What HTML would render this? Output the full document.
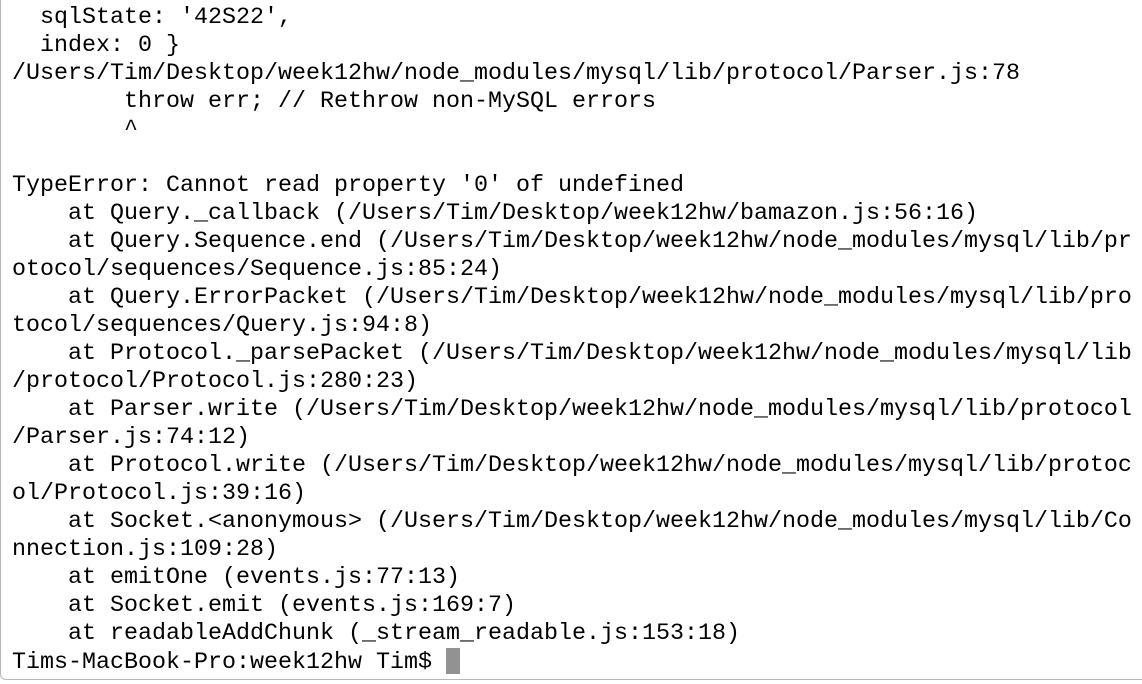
<!DOCTYPE html>
<html><head><style>
html,body{margin:0;padding:0;background:#fff;}
body{width:1142px;height:684px;overflow:hidden;position:relative;}
.win{position:absolute;left:0;top:-10px;width:1150px;height:690px;border:1px solid #b8b8b8;border-radius:0 0 6px 6px;box-sizing:border-box;}
pre{position:absolute;left:12px;top:4px;margin:0;font-family:"Liberation Mono",monospace;font-size:23.33px;line-height:28px;color:#000;}
.cur{display:inline-block;width:14px;height:26px;background:#929292;vertical-align:-6px;}
</style></head><body>
<div class="win"></div>
<pre>  sqlState: '42S22',
  index: 0 }
/Users/Tim/Desktop/week12hw/node_modules/mysql/lib/protocol/Parser.js:78
        throw err; // Rethrow non-MySQL errors
        ^

TypeError: Cannot read property '0' of undefined
    at Query._callback (/Users/Tim/Desktop/week12hw/bamazon.js:56:16)
    at Query.Sequence.end (/Users/Tim/Desktop/week12hw/node_modules/mysql/lib/pr
otocol/sequences/Sequence.js:85:24)
    at Query.ErrorPacket (/Users/Tim/Desktop/week12hw/node_modules/mysql/lib/pro
tocol/sequences/Query.js:94:8)
    at Protocol._parsePacket (/Users/Tim/Desktop/week12hw/node_modules/mysql/lib
/protocol/Protocol.js:280:23)
    at Parser.write (/Users/Tim/Desktop/week12hw/node_modules/mysql/lib/protocol
/Parser.js:74:12)
    at Protocol.write (/Users/Tim/Desktop/week12hw/node_modules/mysql/lib/protoc
ol/Protocol.js:39:16)
    at Socket.&lt;anonymous&gt; (/Users/Tim/Desktop/week12hw/node_modules/mysql/lib/Co
nnection.js:109:28)
    at emitOne (events.js:77:13)
    at Socket.emit (events.js:169:7)
    at readableAddChunk (_stream_readable.js:153:18)
Tims-MacBook-Pro:week12hw Tim$ <span class="cur"></span></pre>
</body></html>
